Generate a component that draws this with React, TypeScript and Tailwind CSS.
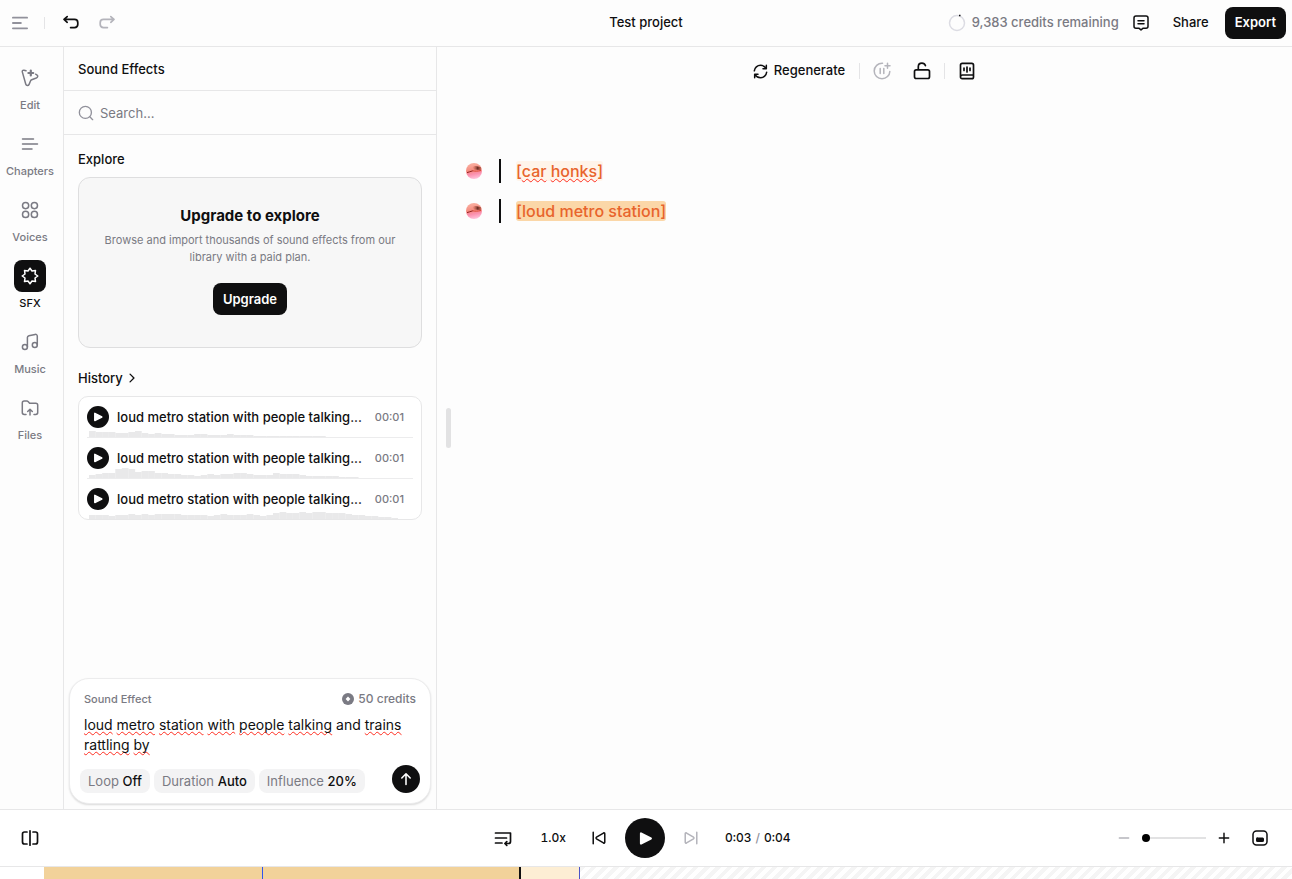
import { useState, type ReactNode } from 'react';

type IconProps = {
  children: ReactNode;
  className?: string;
  size?: number;
  stroke?: number;
};

function Icon({ children, className, size = 18, stroke = 1.5 }: IconProps) {
  return (
    <svg
      width={size}
      height={size}
      viewBox="0 0 18 18"
      fill="none"
      stroke="currentColor"
      strokeWidth={stroke}
      strokeLinecap="round"
      strokeLinejoin="round"
      className={className}
      aria-hidden="true"
    >
      {children}
    </svg>
  );
}

const navItems = [
  {
    label: 'Edit',
    icon: (
      <>
        <path d="M5 1.8 3 1.2C1.8.9 1 1.8 1.3 2.9l3.5 12.3c.5 1.7 2.6 1.8 3.3.2l1.5-3.6c.2-.5.6-.9 1.1-1.1l4.6-1.7c1.7-.7 1.9-2.2.5-3.2l-1.2-.6" />
        <path d="M9.8 1.6v4.8M7.4 4h4.8" strokeWidth={2.2} />
      </>
    ),
  },
  { label: 'Chapters', icon: <path d="M1.5 4h11M1.5 9h15M1.5 14h9.5" /> },
  {
    label: 'Voices',
    icon: (
      <>
        <circle cx="4.6" cy="4.6" r="3.1" />
        <circle cx="13.4" cy="4.6" r="3.1" />
        <circle cx="4.6" cy="13.4" r="3.1" />
        <circle cx="13.4" cy="13.4" r="3.1" />
      </>
    ),
  },
  {
    label: 'SFX',
    icon: (
      <path d="M9 1.2 11 4l3.5-.6L14 7l2.8 2L14 11l.5 3.600L11 14l-2 2.800L7 14l-3.500.6L4 11 1.200 9 4 7l-.5-3.600L7 4z" />
    ),
  },
  {
    label: 'Music',
    icon: (
      <>
        <circle cx="3.9" cy="14.1" r="2.5" />
        <circle cx="13.8" cy="12.1" r="2.5" />
        <path d="M6.4 14.1V4.6c0-1 .6-1.7 1.5-1.9l6.2-1.3c1.2-.2 2.2.6 2.2 1.8v8.9" />
      </>
    ),
  },
  {
    label: 'Files',
    icon: (
      <>
        <path d="M5 15.5H3.2c-1.1 0-1.9-.8-1.9-1.9V4c0-1.1.8-1.9 1.9-1.9h2.7c.5 0 1 .2 1.4.6l1.3 1.5h6.2c1.1 0 1.9.8 1.9 1.9v7.5c0 1.1-.8 1.9-1.9 1.9H13" />
        <path d="M9 16v-5.5M6.7 12.5 9 10.2l2.3 2.3" />
      </>
    ),
  },
];

// bar heights in pixels, one bar per slice of the clip
const history = [
  {
    title: 'loud metro station with people talking...',
    time: '00:01',
    wave: [6, 5, 5, 5, 4, 4, 5, 6, 4, 3, 4, 3, 3, 2, 2, 2, 3, 3, 2, 2, 2, 3, 2, 2, 2, 1, 1, 1, 1, 1, 1, 1, 1, 1, 1, 1, 0, 0, 0, 0, 0, 0, 0, 0, 0, 0, 0, 0, 0],
  },
  {
    title: 'loud metro station with people talking...',
    time: '00:01',
    wave: [3, 4, 5, 5, 9, 10, 9, 6, 7, 7, 5, 5, 4, 4, 3, 3, 2, 3, 4, 3, 4, 4, 5, 5, 4, 3, 3, 3, 5, 4, 4, 4, 3, 2, 2, 2, 2, 2, 1, 1, 1, 0, 0, 0, 0, 0, 0, 0, 0],
  },
  {
    title: 'loud metro station with people talking...',
    time: '00:01',
    wave: [4, 4, 4, 3, 4, 4, 5, 4, 5, 4, 5, 5, 5, 5, 4, 4, 4, 4, 3, 4, 5, 4, 4, 4, 5, 4, 3, 4, 6, 7, 6, 6, 7, 6, 7, 7, 6, 6, 6, 5, 4, 4, 3, 3, 2, 2, 1, 0, 0],
  },
];

const lines = [
  { words: ['car', 'honks'], selected: false },
  { words: ['loud', 'metro', 'station'], selected: true },
];

const settings = [
  { label: 'Loop', value: 'Off' },
  { label: 'Duration', value: 'Auto' },
  { label: 'Influence', value: '20%' },
];

const squiggle =
  'underline decoration-[#ff2d20] decoration-wavy decoration-1 underline-offset-1 [text-decoration-skip-ink:none]';

function Divider({ className = '' }: { className?: string }) {
  return <span className={`w-px bg-[#e4e4e6] ${className}`} />;
}

function Header() {
  return (
    <header className="flex h-[47px] shrink-0 items-center border-b border-[#e7e7e8] px-1.5">
      <div className="flex flex-1 items-center">
        <button aria-label="Menu" className="ml-1.5 text-[#91919b]">
          <Icon size={16} stroke={2}>
            <path d="M1 3h16M1 9h9M1 15h16" />
          </Icon>
        </button>
        <Divider className="ml-4 h-3" />
        <button aria-label="Undo" className="ml-[17px]">
          <Icon stroke={1.7}>
            <path d="M5.2 2.6 2 5.4l3.2 2.9M2.3 5.4h10.2c2 0 3.3 1.4 3.3 3.3v1.6c0 2-1.3 3.3-3.3 3.3H8.6" />
          </Icon>
        </button>
        <button aria-label="Redo" className="ml-[18px] text-[#b4b4bb]">
          <Icon stroke={1.7}>
            <path d="m12.8 2.6 3.2 2.8-3.2 2.9M15.7 5.4H5.5c-2 0-3.3 1.4-3.3 3.3v1.6c0 2 1.3 3.3 3.3 3.3h3.9" />
          </Icon>
        </button>
      </div>
      <h1 className="text-[13px] font-medium">Test project</h1>
      <div className="flex flex-1 items-center justify-end text-[13px]">
        <svg width="18" height="18" viewBox="0 0 18 18" fill="none" aria-hidden="true">
          <circle cx="9" cy="9" r="7.5" stroke="#dcdce3" strokeWidth="1.5" />
          <path d="M11 1.5h1.5" stroke="#0f0f10" strokeWidth="1.5" />
        </svg>
        <span className="ml-1.5 font-medium text-[#7a7a83]">9,383 credits remaining</span>
        <button aria-label="Feedback" className="ml-[13px]">
          <Icon>
            <path d="M4 2h10c1.2 0 2 .8 2 2v8.2c0 1.2-.8 2-2 2h-2.8L9 15.9l-2.2-1.7H4c-1.2 0-2-.8-2-2V4c0-1.2.8-2 2-2ZM6 6.8h6M6 9.8h6" />
          </Icon>
        </button>
        <button className="ml-[13px] h-8 px-2.5 font-medium">Share</button>
        <button className="ml-1.5 h-8 rounded-lg bg-[#0f0f10] px-2.5 font-semibold text-white">
          Export
        </button>
      </div>
    </header>
  );
}

function SideNav() {
  return (
    <nav className="flex w-16 shrink-0 flex-col gap-[15px] border-r border-[#e7e7e8] pt-[15px] pr-[3px]">
      {navItems.map(({ label, icon }) => {
        const active = label === 'SFX';
        return (
          <button
            key={label}
            className={`flex flex-col items-center gap-[3px] text-[11px] leading-4 font-medium ${
              active ? 'text-[#0f0f10]' : 'text-[#7a7a83]'
            }`}
          >
            <span
              className={`flex size-8 items-center justify-center rounded-lg ${
                active ? 'bg-[#0f0f10] text-white' : ''
              }`}
            >
              <Icon>{icon}</Icon>
            </span>
            {label}
          </button>
        );
      })}
    </nav>
  );
}

function Waveform({ bars }: { bars: number[] }) {
  return (
    <svg
      className="absolute inset-x-0.5 bottom-0 h-2.5 w-[calc(100%-4px)]"
      viewBox={`0 0 ${bars.length} 10`}
      preserveAspectRatio="none"
      fill="#e9e9ea"
      aria-hidden="true"
    >
      {bars.map((h, i) => (
        <rect key={i} x={i} y={10 - h} width={1.02} height={h} />
      ))}
    </svg>
  );
}

function PlayGlyph({ size }: { size: number }) {
  return (
    <svg width={size} height={size} viewBox="0 0 12 12" aria-hidden="true">
      <path
        d="M2.8 2.4v7.2L9.8 6z"
        fill="currentColor"
        stroke="currentColor"
        strokeWidth="1.5"
        strokeLinejoin="round"
      />
    </svg>
  );
}

function HistoryList() {
  return (
    <ul className="mt-2 overflow-hidden rounded-[10px] border border-[#e7e7e8] bg-white px-2">
      {history.map((item, i) => (
        <li
          key={i}
          className="relative flex h-[41px] items-center border-b border-[#ececed] last:h-10 last:border-b-0"
        >
          <Waveform bars={item.wave} />
          <button
            aria-label="Play"
            className="relative flex size-[22px] shrink-0 items-center justify-center rounded-full bg-[#0f0f10] text-white"
          >
            <PlayGlyph size={12} />
          </button>
          <span className="relative ml-2 min-w-0 flex-1 truncate pt-0.5 text-[13px] font-medium">
            {item.title}
          </span>
          <span className="relative mr-[9px] ml-2 text-[11px] font-medium text-[#7a7a83]">
            {item.time}
          </span>
        </li>
      ))}
    </ul>
  );
}

function Composer() {
  const [prompt, setPrompt] = useState(
    'loud metro station with people talking and trains rattling by'
  );

  return (
    <form className="mx-[5px] mb-[5px] rounded-[20px] border border-[#ececed] bg-white p-2.5 shadow-[0_1px_2px_rgba(0,0,0,0.14)]">
      <div className="flex h-5 items-center justify-between px-1 text-[#7a7a83]">
        <label htmlFor="prompt" className="text-[11px] font-medium">
          Sound Effect
        </label>
        <span className="flex items-center gap-1 text-[12px] font-medium">
          <svg width="12" height="12" viewBox="0 0 12 12" aria-hidden="true">
            <circle cx="6" cy="6" r="6" fill="#7a7a83" />
            <path d="M6 3.6 8.4 6 6 8.4 3.6 6z" fill="#fff" />
          </svg>
          50 credits
        </span>
      </div>
      <div className="relative mt-1.5 px-1 text-[14px] leading-5">
        <p aria-hidden="true" className="absolute inset-x-1 top-0 text-transparent">
          {prompt.split(' ').map((word, i) => (
            <span key={i}>
              <span className={word === 'and' ? '' : squiggle}>{word}</span>{' '}
            </span>
          ))}
        </p>
        <textarea
          id="prompt"
          rows={2}
          spellCheck={false}
          value={prompt}
          onChange={(e) => setPrompt(e.target.value)}
          className="relative block w-full resize-none bg-transparent outline-none"
        />
      </div>
      <div className="mt-2.5 flex items-end gap-1">
        {settings.map(({ label, value }) => (
          <button
            key={label}
            type="button"
            className="h-6 rounded-lg bg-[#f3f3f4] px-2 pt-px text-[13px] text-[#7a7a83]"
          >
            {label} <span className="font-medium text-[#0f0f10]">{value}</span>
          </button>
        ))}
        <button
          type="button"
          aria-label="Generate"
          className="ml-auto flex size-7 items-center justify-center rounded-full bg-[#0f0f10] text-white"
        >
          <Icon size={14} stroke={2}>
            <path d="M9 16V2.5M3.6 7.700 9 2.300l5.400 5.400" />
          </Icon>
        </button>
      </div>
    </form>
  );
}

function SoundEffectsPanel() {
  return (
    <aside className="flex w-[373px] shrink-0 flex-col border-r border-[#e7e7e8]">
      <h2 className="flex h-11 items-center border-b border-[#e7e7e8] px-3.5 pt-0.5 text-[13px] font-medium">
        Sound Effects
      </h2>
      <label className="flex h-11 items-center gap-1.5 border-b border-[#e7e7e8] px-3.5">
        <Icon size={16} className="text-[#91919b]">
          <circle cx="8.3" cy="8.3" r="6.8" />
          <path d="m13.3 13.3 3.2 3.2" />
        </Icon>
        <input
          type="text"
          aria-label="Search sound effects"
          placeholder="Search..."
          className="min-w-0 flex-1 pt-0.5 text-[13px] outline-none placeholder:text-[#7a7a83]"
        />
      </label>
      <div className="flex-1 overflow-hidden px-3.5 pt-3.5">
        <h3 className="text-[13px] leading-5 font-medium">Explore</h3>
        <div className="mt-2 flex flex-col items-center rounded-xl border border-[#dededf] bg-[#f7f7f7] px-6 pt-[26px] pb-8 text-center">
          <h4 className="text-[15px] leading-6 font-bold">Upgrade to explore</h4>
          <p className="mt-1 text-[11px] leading-[17px] text-[#7a7a83]">
            Browse and import thousands of sound effects from our library with a paid plan.
          </p>
          <button className="mt-[17px] h-8 rounded-lg bg-[#0f0f10] px-2.5 pt-px text-[13px] font-semibold text-white">
            Upgrade
          </button>
        </div>
        <button className="mt-5 flex items-center gap-1 text-[13px] leading-5 font-medium">
          History
          <Icon size={10} stroke={2.4}>
            <path d="m5.5 2 7 7-7 7" />
          </Icon>
        </button>
        <HistoryList />
      </div>
      <Composer />
    </aside>
  );
}

function VoiceAvatar() {
  return (
    <svg width="16" height="16" viewBox="0 0 16 16" aria-hidden="true">
      <defs>
        <linearGradient id="voice" x1="0.3" y1="0" x2="0.5" y2="1">
          <stop offset="0" stopColor="#fab3a4" />
          <stop offset="0.45" stopColor="#f58c80" />
          <stop offset="0.7" stopColor="#fb8fae" />
          <stop offset="1" stopColor="#ffc3dc" />
        </linearGradient>
        <linearGradient id="voice-shade" x1="0" y1="0" x2="1" y2="0">
          <stop offset="0" stopColor="#e0735f" stopOpacity="0.2" />
          <stop offset="0.6" stopColor="#6b2c22" />
          <stop offset="1" stopColor="#c96a58" />
        </linearGradient>
        <clipPath id="voice-clip">
          <circle cx="8" cy="8" r="8" />
        </clipPath>
      </defs>
      <g clipPath="url(#voice-clip)">
        <rect width="16" height="16" fill="url(#voice)" />
        <path d="M6.5 4 9 3l6 1v3l-7-.6z" fill="url(#voice-shade)" />
        <path d="M1 9.6c2-.2 3.5-1.400 5.800-1.800" fill="none" stroke="#8f1f1c" strokeWidth="1" />
        <path d="M6.8 7.8c2.5.6 5 .4 8.200-.3" fill="none" stroke="#d8452f" strokeWidth="1" />
      </g>
    </svg>
  );
}

function Editor() {
  return (
    <main className="relative flex min-w-0 flex-1 flex-col">
      <div className="flex h-12 items-center justify-center">
        <button className="flex items-center gap-1.5 text-[13px] font-medium">
          <Icon size={15} stroke={1.8}>
            <path d="M1.6 8.2C2 4.5 5.2 1.5 9 1.5c2.8 0 5 1.4 6.6 3.8M16 1.6v4h-4M16.4 9.8c-.4 3.7-3.6 6.7-7.4 6.7-2.8 0-5-1.4-6.6-3.8M2 16.4v-4h4" />
          </Icon>
          Regenerate
        </button>
        <Divider className="ml-3.5 h-4" />
        <button aria-label="Add pause" className="ml-[13px] text-[#b4b4bb]">
          <Icon>
            <path d="M9.5 1.3C5 1.1 1.2 4.5 1.2 9S4.7 16.8 9 16.8s7.8-3.5 7.8-7.3M7.2 6.5v5M10.8 6.5v5M14.5 1.2v5M12 3.7h5" />
          </Icon>
        </button>
        <button aria-label="Lock" className="ml-[22px]">
          <Icon stroke={1.7}>
            <path d="M3.2 7.8h11.6c1 0 1.7.7 1.7 1.7v5.3c0 1-.7 1.7-1.7 1.7H3.2c-1 0-1.7-.7-1.7-1.7V9.5c0-1 .7-1.7 1.7-1.7ZM5.3 7.5V4.8c0-2 1.5-3.6 3.6-3.6 1.7 0 3 .9 3.5 2.4" />
          </Icon>
        </button>
        <Divider className="ml-[13px] h-4" />
        <button aria-label="Pronunciation dictionary" className="ml-[13px]">
          <Icon stroke={1.7}>
            <path d="M4.2 1.3h9.6c1 0 1.7.7 1.7 1.7v12c0 1-.7 1.7-1.7 1.7H4.2c-1 0-1.7-.7-1.7-1.7V3c0-1 .7-1.7 1.7-1.7ZM2.5 15c0-1.4.8-2 2-2h11M6 6v2.5M9 5v5M12 6v2.5" />
          </Icon>
        </button>
      </div>
      <div className="flex flex-col gap-4 pt-16 pl-[29px]">
        {lines.map(({ words, selected }) => (
          <div key={words[0]} className="flex items-center">
            <VoiceAvatar />
            <span className="ml-[17px] h-6 w-0.5 bg-[#0f0f10]" />
            <p className="ml-[15px] text-[16px] leading-6 font-medium text-[#e8642c]">
              <span className={`rounded-[3px] ${selected ? 'bg-[#fbd7a8]' : 'bg-[#fff4ea]'}`}>
                [
                {words.map((word, i) => (
                  <span key={word}>
                    {i > 0 && ' '}
                    <span className={selected ? '' : squiggle}>{word}</span>
                  </span>
                ))}
                ]
              </span>
            </p>
          </div>
        ))}
      </div>
      <span className="absolute top-1/2 left-[9px] h-10 w-[5px] -translate-y-1/2 rounded-full bg-[#e2e2e3]" />
    </main>
  );
}

function Player() {
  return (
    <div className="flex h-[57px] shrink-0 items-center border-t border-[#e7e7e8] bg-white pr-[23px] pl-[21px] text-[12px] tabular-nums">
      <div className="flex flex-1 items-center">
        <button aria-label="Split clip">
          <Icon stroke={1.7}>
            <path d="M9 1.8v14.4M6 3H3.5c-1.3 0-2 .7-2 2v8c0 1.3.7 2 2 2H6M12 3h2.5c1.3 0 2 .7 2 2v8c0 1.3-.7 2-2 2H12" />
          </Icon>
        </button>
        <button aria-label="Queue" className="ml-auto">
          <Icon stroke={1.7}>
            <path d="M1.5 4h15v8.5c0 1.2-.8 2-2 2h-3M1.5 9h11M1.5 14h6.5" />
            <path d="m12.8 12.6-1.9 1.9 1.9 1.9" />
          </Icon>
        </button>
        <button className="ml-[29px] font-medium">1.0x</button>
        <button aria-label="Previous" className="mr-[18px] ml-[25px]">
          <Icon size={16} stroke={1.7}>
            <path d="M2.5 2.5v13M14 3.4 6.2 8.1c-.7.5-.7 1.3 0 1.8l7.8 4.7c.8.4 1.5 0 1.5-.8V4.2c0-.8-.7-1.2-1.5-.8Z" />
          </Icon>
        </button>
      </div>
      <button
        aria-label="Play"
        className="flex size-10 items-center justify-center rounded-full bg-[#0f0f10] text-white"
      >
        <PlayGlyph size={17} />
      </button>
      <div className="flex flex-1 items-center">
        <button aria-label="Next" className="ml-[18px] text-[#b4b4bb]">
          <Icon size={16} stroke={1.7}>
            <path d="M15.5 2.5v13M4 3.4l7.8 4.7c.7.5.7 1.3 0 1.8L4 14.6c-.8.4-1.5 0-1.5-.8V4.2c0-.8.7-1.2 1.5-.8Z" />
          </Icon>
        </button>
        <span className="ml-[26px] flex gap-1 font-medium">
          <span>0:03</span>
          <span className="text-[#91919b]">/</span>
          <span>0:04</span>
        </span>
        <button aria-label="Zoom out" className="ml-auto text-[#b4b4bb]">
          <Icon size={12} stroke={2.2}>
            <path d="M2 9h14" />
          </Icon>
        </button>
        <input
          type="range"
          aria-label="Timeline zoom"
          defaultValue={0}
          className="ml-3 h-2 w-16 appearance-none bg-linear-to-r from-[#e2e2e3] to-[#e2e2e3] bg-[length:100%_2px] bg-center bg-no-repeat [&::-webkit-slider-thumb]:size-2 [&::-webkit-slider-thumb]:appearance-none [&::-webkit-slider-thumb]:rounded-full [&::-webkit-slider-thumb]:bg-black"
        />
        <button aria-label="Zoom in" className="ml-3">
          <Icon size={12} stroke={2.2}>
            <path d="M2 9h14M9 2v14" />
          </Icon>
        </button>
        <button aria-label="Toggle timeline" className="ml-[21px]">
          <Icon>
            <rect x="2" y="2" width="14" height="14" rx="3.5" />
            <rect x="5.5" y="9" width="7" height="3.5" rx="0.6" fill="currentColor" strokeWidth="1" />
          </Icon>
        </button>
      </div>
    </div>
  );
}

function Timeline() {
  return (
    <div className="flex h-[13px] shrink-0 border-t border-[#e7e7e8] bg-white">
      <div className="w-11" />
      <div className="w-[218px] bg-[#f2d29a]" />
      <div className="w-[257px] border-l border-[#2f55f0] bg-[#f2d29a]" />
      <div className="w-0.5 bg-[#0f0f10]" />
      <div className="w-[59px] border-r border-[#4b55c8] bg-[#fdeed4]" />
      <div className="flex-1 bg-[repeating-linear-gradient(135deg,#f5f5f5_0px,#f5f5f5_4px,#ffffff_4px,#ffffff_8px)]" />
    </div>
  );
}

export default function App() {
  return (
    <div className="flex h-screen flex-col overflow-hidden bg-[#fdfdfd] font-['Inter',sans-serif] text-[#0f0f10]">
      <Header />
      <div className="flex min-h-0 flex-1">
        <SideNav />
        <SoundEffectsPanel />
        <Editor />
      </div>
      <Player />
      <Timeline />
    </div>
  );
}
